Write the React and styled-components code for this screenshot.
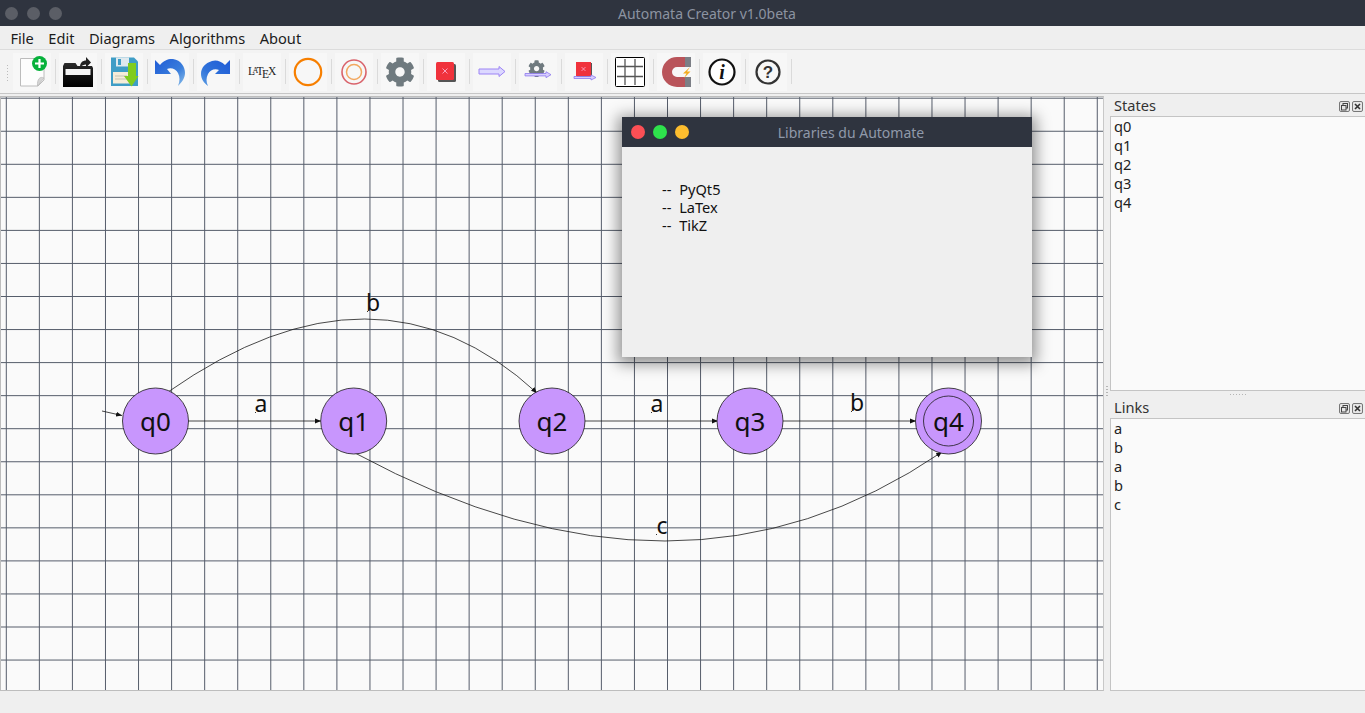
import React from "react";
import styled, { createGlobalStyle } from "styled-components";
import { FaCog } from "react-icons/fa";

const GlobalStyle = createGlobalStyle`
  html, body {
    margin: 0;
    padding: 0;
    height: 713px;
    overflow: hidden;
    background: #efefef;
    font-family: "Noto Sans", "Liberation Sans", sans-serif;
  }
`;

const Page = styled.div`
  position: relative;
  width: 1365px;
  height: 713px;
  display: flex;
  flex-direction: column;
  overflow: hidden;
  background: #efefef;
`;

const TitleBar = styled.div`
  height: 26px;
  flex: none;
  position: relative;
  display: flex;
  align-items: center;
  justify-content: center;
  padding-left: 49px;
  box-sizing: border-box;
  background: #2f343f;
  color: #8c93a1;
  font-size: 14px;
`;

const Lights = styled.div`
  position: absolute;
  left: 5px;
  top: 7px;
  display: flex;
  gap: 9px;
`;

const Light = styled.span`
  width: ${(props) => props.$size || 13}px;
  height: ${(props) => props.$size || 13}px;
  border-radius: 50%;
  background: ${(props) => props.$color || "#5b5e66"};
`;

const MenuBar = styled.div`
  height: 24px;
  flex: none;
  display: flex;
  align-items: center;
  gap: 14.5px;
  padding-left: 10.5px;
  background: #efefef;
  border-bottom: 1px solid #dcdcdc;
  box-sizing: border-box;
  color: #1c1c1c;
  font-size: 14.6px;
`;

const ToolBar = styled.div`
  height: 44px;
  flex: none;
  position: relative;
  display: flex;
  align-items: center;
  padding-left: 13px;
  box-sizing: border-box;
  background: #f3f3f3;
  border-bottom: 1px solid #c6c6c6;
`;

const Grip = styled.div`
  position: absolute;
  left: 6px;
  top: 14px;
  width: 4px;
  height: 19px;
  background-image: radial-gradient(#bcbcbc 0.7px, transparent 0.8px);
  background-size: 3px 3px;
`;

const ToolButton = styled.div`
  width: 38px;
  height: 38px;
  flex: none;
  display: flex;
  align-items: center;
  justify-content: center;
  background: #f7f7f7;
`;

const Separator = styled.div`
  width: 1px;
  height: 25px;
  flex: none;
  margin: 0 3px 0 4px;
  background: #dadada;
`;

const Main = styled.div`
  flex: 1;
  min-height: 0;
  display: flex;
  padding-top: 2px;
`;

const Canvas = styled.div`
  width: 1104px;
  flex: none;
  background: #fafafa;
  border: 1px solid #bdbdbd;
  border-right-color: #c8c8c8;
  box-sizing: border-box;
  height: 595px;
  overflow: hidden;
  svg {
    display: block;
  }
`;

const Dock = styled.div`
  flex: 1;
  display: flex;
  flex-direction: column;
  padding-left: 6px;
`;

const PanelHead = styled.div`
  height: 20px;
  flex: none;
  display: flex;
  align-items: center;
  justify-content: space-between;
  padding: 0 2px 2px 4px;
  box-sizing: border-box;
  color: #333;
  font-size: 14.6px;
`;

const HeadIcons = styled.div`
  display: flex;
  gap: 2px;
  margin-top: 2px;
`;

const PanelList = styled.div`
  height: ${(props) => props.$height}px;
  flex: none;
  box-sizing: border-box;
  padding: 0 3px;
  background: #fafafa;
  border: 1px solid #c4c4c4;
  border-right: none;
`;

const ListItem = styled.div`
  height: 19px;
  line-height: 19px;
  color: #222;
  font-size: 14.6px;
`;

const SplitHandle = styled.div`
  height: 7px;
  flex: none;
  display: flex;
  justify-content: center;
  align-items: center;
  &::before {
    content: "";
    width: 17px;
    height: 1px;
    background-image: radial-gradient(#b5b5b5 0.6px, transparent 0.7px);
    background-size: 3px 1px;
  }
`;

const SideGrip = styled.div`
  position: absolute;
  left: 1106px;
  top: 385px;
  width: 2px;
  height: 12px;
  background-image: radial-gradient(#b5b5b5 0.6px, transparent 0.7px);
  background-size: 2px 3px;
`;

const StatusBar = styled.div`
  height: 22px;
  flex: none;
  background: #efefef;
`;

const FloatWindow = styled.div`
  position: absolute;
  left: 622px;
  top: 117px;
  width: 410px;
  height: 240px;
  background: #efefef;
  box-shadow: 0 3px 14px 4px rgba(0, 0, 0, 0.42);
`;

const FloatTitle = styled.div`
  position: relative;
  height: 30px;
  display: flex;
  align-items: center;
  justify-content: center;
  padding-left: 48px;
  box-sizing: border-box;
  background: #2f343f;
  color: #8f99aa;
  font-size: 14px;
`;

const FloatLights = styled.div`
  position: absolute;
  left: 9px;
  top: 8px;
  display: flex;
  gap: 8px;
`;

const FloatBody = styled.div`
  padding: 33px 0 0 40px;
  color: #111;
  font-size: 14.6px;
  line-height: 18px;
  word-spacing: 4px;
`;

const NewIcon = () => (
  <svg width="32" height="32" viewBox="0 0 32 32">
    <path d="M4.500 2.500H28V24l-6 6H4.500z" fill="#fdfdfd" stroke="#bcbcbc" strokeWidth="1" />
    <path d="M28 22c-4-2-7 1-6.500 8z" fill="#d5d5d5" stroke="#bbb" strokeWidth="0.800" />
    <circle cx="23.500" cy="7.500" r="7.500" fill="#07b13b" />
    <path d="M23.500 3v9M19 7.500h9" stroke="#fff" strokeWidth="2.200" />
  </svg>
);

const OpenIcon = () => (
  <svg width="32" height="32" viewBox="0 0 32 32">
    <defs>
      <linearGradient id="openFill" x1="0" y1="0" x2="0" y2="1">
        <stop offset="0" stopColor="#2c2c2c" />
        <stop offset="0.500" stopColor="#111" />
        <stop offset="1" stopColor="#000" />
      </linearGradient>
    </defs>
    <path d="M1 31V10l1.500-3h11l2 3H30l1 2v19z" fill="url(#openFill)" />
    <path d="M3.500 13h25v6h-25z" fill="#f4f4f4" />
    <path d="M18 11c0-4.500 3-6.500 6-6.500V1l5 5.500-5 5V8.500c-2 0-4 1-6 2.500z" fill="#222" />
  </svg>
);

const SaveIcon = () => (
  <svg width="32" height="32" viewBox="0 0 32 32">
    <path d="M3 1.500h23l4 4V30H3z" fill="#3f9dc6" />
    <path d="M8 1.500h13v9H8z" fill="#dfe9ee" />
    <path d="M10 3h3v6h-3z" fill="#3f9dc6" />
    <path d="M5 16h19v11.500H5z" fill="#f5ecd8" />
    <path d="M7 20h12M7 23h12" stroke="#c3c3b4" strokeWidth="1" />
    <path d="M20 7h8v13h2.500L23.500 30.500 16 20h4z" fill="#7fcc1e" />
  </svg>
);

const UndoIcon = () => (
  <svg width="32" height="32" viewBox="0 0 32 32">
    <defs>
      <linearGradient id="undoFill" x1="0" y1="0" x2="1" y2="1">
        <stop offset="0" stopColor="#1f5bd6" />
        <stop offset="0.600" stopColor="#3a7edc" />
        <stop offset="1" stopColor="#8cc0ea" />
      </linearGradient>
    </defs>
    <path d="M1 4L6 9C10 4 15 2.500 19 3C27 4 31 11 31 17C31 22 28 26 24 30C26 25 26 21 24 17C22 13 17 11 13 13L17 18H1z" fill="url(#undoFill)" />
  </svg>
);

const RedoIcon = () => (
  <svg width="32" height="32" viewBox="0 0 32 32">
    <defs>
      <linearGradient id="redoFill" x1="1" y1="0" x2="0" y2="1">
        <stop offset="0" stopColor="#1f5bd6" />
        <stop offset="0.600" stopColor="#2f72da" />
        <stop offset="1" stopColor="#5ea0e4" />
      </linearGradient>
    </defs>
    <path d="M30 4L25 9C21 5 16 3.500 12 5C5 7 1 12 1 18C1 23 4 27 8 30C6 26 6 22 8 18C10 14 15 12 19 14L15 18H30z" fill="url(#redoFill)" />
  </svg>
);

const LatexIcon = () => (
  <svg width="32" height="32" viewBox="0 0 32 32" fontFamily="Liberation Serif, serif" fill="#222">
    <text x="2" y="19" fontSize="11.500">L</text>
    <text x="6.500" y="17" fontSize="8">A</text>
    <text x="10.500" y="19" fontSize="11.500">T</text>
    <text x="16" y="21.500" fontSize="11.500">E</text>
    <text x="22" y="19" fontSize="11.500">X</text>
  </svg>
);

const StateIcon = () => (
  <svg width="32" height="32" viewBox="0 0 32 32">
    <circle cx="16" cy="16" r="13.200" fill="none" stroke="#f77f00" strokeWidth="2.200" />
  </svg>
);

const FinalIcon = () => (
  <svg width="32" height="32" viewBox="0 0 32 32">
    <circle cx="16" cy="16" r="12" fill="none" stroke="#d9636b" strokeWidth="1.600" />
    <circle cx="16" cy="16" r="7.500" fill="none" stroke="#f2a860" strokeWidth="1.500" />
  </svg>
);

const GearIcon = () => <FaCog size={30} color="#6f7a7f" />;

const StopIcon = () => (
  <svg width="32" height="32" viewBox="0 0 32 32">
    <rect x="8" y="8" width="18" height="18" rx="1.500" fill="#555" />
    <rect x="6" y="6" width="18" height="18" rx="1.500" fill="#f0323c" />
    <path d="M12.500 12.500l5 5M17.500 12.500l-5 5" stroke="#fbd" strokeWidth="0.800" />
  </svg>
);

const ArrowIcon = () => (
  <svg width="32" height="32" viewBox="0 0 32 32">
    <path d="M3 13h20v-2.500l6 5-6 5V18H3z" fill="#dcd8ff" stroke="#9d84f5" strokeWidth="1" />
  </svg>
);

const GearArrowIcon = () => (
  <svg width="32" height="32" viewBox="0 0 32 32">
    <g transform="translate(6 4) scale(0.0335)" fill="#6f7a7f">
      <path d="M487.400 315.700l-42.600-24.600c4.300-23.200 4.300-47 0-70.200l42.600-24.600c4.900-2.800 7.100-8.600 5.500-14-11.100-35.600-30-67.800-54.700-94.600-3.800-4.100-10-5.100-14.800-2.300L380.800 110c-17.900-15.400-38.500-27.300-60.800-35.100V25.800c0-5.600-3.900-10.500-9.400-11.700-36.700-8.200-74.300-7.800-109.200 0-5.500 1.200-9.400 6.100-9.400 11.700V75c-22.200 7.900-42.800 19.800-60.800 35.100L88.700 85.500c-4.900-2.800-11-1.900-14.800 2.300-24.700 26.700-43.600 58.900-54.700 94.600-1.700 5.400.6 11.200 5.500 14L67.300 221c-4.300 23.200-4.300 47 0 70.200l-42.600 24.600c-4.900 2.800-7.100 8.600-5.500 14 11.100 35.600 30 67.800 54.700 94.600 3.800 4.100 10 5.100 14.800 2.300l42.600-24.600c17.900 15.400 38.500 27.300 60.800 35.100v49.200c0 5.600 3.900 10.500 9.400 11.700 36.700 8.200 74.300 7.800 109.200 0 5.500-1.200 9.400-6.100 9.400-11.700v-49.200c22.200-7.900 42.800-19.800 60.800-35.100l42.600 24.600c4.900 2.800 11 1.900 14.800-2.300 24.700-26.700 43.600-58.900 54.700-94.600 1.500-5.500-.7-11.300-5.600-14.100zM256 336c-44.100 0-80-35.900-80-80s35.900-80 80-80 80 35.900 80 80-35.900 80-80 80z" />
    </g>
    <path d="M3 17.500h21v-1.800l5 3-5 3v-1.800H3z" fill="#d8ceff" stroke="#8d78ee" strokeWidth="0.800" />
  </svg>
);

const StopArrowIcon = () => (
  <svg width="32" height="32" viewBox="0 0 32 32">
    <rect x="9" y="7" width="15" height="14" fill="#555" />
    <rect x="8" y="6" width="15" height="14" fill="#f0323c" />
    <path d="M13.500 11l4 4M17.500 11l-4 4" stroke="#fbd" strokeWidth="0.700" />
    <path d="M6 20.500h17v-1.500l5 2.500-5 2.500v-1.500H6z" fill="#d8ceff" stroke="#8d78ee" strokeWidth="0.800" />
  </svg>
);

const GridIcon = () => (
  <svg width="32" height="32" viewBox="0 0 32 32">
    <rect x="1.500" y="1.500" width="29" height="29" rx="1" fill="#fff" stroke="#000" strokeWidth="1" />
    <path d="M11 3v26M21 3v26M3 10.500h26M3 20.500h26" stroke="#555" strokeWidth="1.300" />
  </svg>
);

const MagnetIcon = () => (
  <svg width="32" height="32" viewBox="0 0 32 32">
    <path d="M31 1H17a15 15 0 0 0 0 30h14V21H17a5 5 0 0 1 0-10h14z" fill="#b9545a" />
    <path d="M25 1h6v10h-6zM25 21h6v10h-6z" fill="#7c7f86" />
    <path d="M30 11l-7 6.500h3.500L24 22l6.500-6.500H27z" fill="#f4ac1f" />
  </svg>
);

const InfoIcon = () => (
  <svg width="32" height="32" viewBox="0 0 32 32">
    <circle cx="16" cy="16" r="12.500" fill="#fff" stroke="#111" strokeWidth="2.200" />
    <text x="16" y="23" textAnchor="middle" fontFamily="Liberation Serif, serif" fontStyle="italic" fontWeight="700" fontSize="20" fill="#111">i</text>
  </svg>
);

const HelpIcon = () => (
  <svg width="32" height="32" viewBox="0 0 32 32">
    <circle cx="16" cy="16" r="11.500" fill="none" stroke="#333" strokeWidth="2.200" />
    <text x="16" y="22" textAnchor="middle" fontFamily="Liberation Sans, sans-serif" fontWeight="700" fontSize="17" fill="#333">?</text>
  </svg>
);

const FloatGlyph = () => (
  <svg width="11" height="11" viewBox="0 0 11 11">
    <rect x="0.500" y="0.500" width="10" height="10" rx="1.500" fill="#e6e6e6" stroke="#777" />
    <rect x="4" y="2.500" width="4.500" height="4.500" fill="none" stroke="#444" />
    <rect x="2.500" y="4.500" width="4.500" height="4.500" fill="#e6e6e6" stroke="#444" />
  </svg>
);

const CloseGlyph = () => (
  <svg width="11" height="11" viewBox="0 0 11 11">
    <rect x="0.500" y="0.500" width="10" height="10" rx="1.500" fill="#e6e6e6" stroke="#777" />
    <path d="M3 3l5 5M8 3l-5 5" stroke="#333" strokeWidth="1.600" />
  </svg>
);

const tools = [
  NewIcon, OpenIcon, SaveIcon, UndoIcon, RedoIcon, LatexIcon, StateIcon, FinalIcon, GearIcon,
  StopIcon, ArrowIcon, GearArrowIcon, StopArrowIcon, GridIcon, MagnetIcon, InfoIcon, HelpIcon,
];

const verticals = Array.from({ length: 34 }, (_, i) => 5.3 + i * 33.06);
const horizontals = Array.from({ length: 18 }, (_, i) => 1.2 + i * 33.05);

const nodes = [
  { name: "q0", x: 154.5 },
  { name: "q1", x: 352.7 },
  { name: "q2", x: 551 },
  { name: "q3", x: 749 },
  { name: "q4", x: 947.5, final: true },
];

const labels = [
  { text: "a", x: 260, y: 315 },
  { text: "b", x: 372, y: 214 },
  { text: "a", x: 656, y: 315 },
  { text: "b", x: 856, y: 314 },
  { text: "c", x: 661, y: 437 },
];

// canvas origin sits at page (1, 97)
const AutomatonDrawing = () => (
  <svg width="1102" height="593" viewBox="0 0 1102 593">
    <defs>
      <marker id="tip" markerWidth="7" markerHeight="6" refX="6" refY="3" orient="auto" markerUnits="userSpaceOnUse">
        <path d="M0 0.500L6 3L0 5.500z" fill="#111" />
      </marker>
    </defs>
    {verticals.map((x) => (
      <line key={x} x1={x} x2={x} y1="0" y2="593" stroke="#565d6b" strokeWidth="1" />
    ))}
    {horizontals.map((y) => (
      <line key={y} x1="0" x2="1102" y1={y} y2={y} stroke="#565d6b" strokeWidth="1" />
    ))}
    <g fill="none" stroke="#1a1a1a" strokeWidth="0.800">
      <line x1="101" y1="314" x2="121" y2="318.500" markerEnd="url(#tip)" />
      <line x1="187" y1="324" x2="320" y2="324" markerEnd="url(#tip)" />
      <line x1="584" y1="324" x2="717" y2="324" markerEnd="url(#tip)" />
      <line x1="782" y1="324" x2="915" y2="324" markerEnd="url(#tip)" />
      <path d="M167 295Q376 148.500 536 296" markerEnd="url(#tip)" />
      <path d="M354 356Q680.500 532.500 941 355" markerEnd="url(#tip)" />
    </g>
    {nodes.map((n) => (
      <g key={n.name}>
        <circle cx={n.x} cy="324" r="33" fill="#c896fd" stroke="#1a1a1a" strokeWidth="0.800" />
        {n.final && <circle cx={n.x} cy="324" r="25" fill="none" stroke="#1a1a1a" strokeWidth="0.800" />}
        <text x={n.x} y="333.500" textAnchor="middle" fontFamily="Noto Sans, sans-serif" fontSize="26" fill="#111">
          {n.name}
        </text>
      </g>
    ))}
    {labels.map((l, i) => (
      <g key={i}>
        <rect x={l.x - 6} y={l.y} width="1" height="1" fill="#333" />
        <text x={l.x} y={l.y} textAnchor="middle" fontFamily="Noto Sans, sans-serif" fontSize="23" fill="#111">
          {l.text}
        </text>
      </g>
    ))}
  </svg>
);

const Panel = ({ title, items, height }) => (
  <>
    <PanelHead>
      {title}
      <HeadIcons>
        <FloatGlyph />
        <CloseGlyph />
      </HeadIcons>
    </PanelHead>
    <PanelList $height={height}>
      {items.map((item, i) => (
        <ListItem key={i}>{item}</ListItem>
      ))}
    </PanelList>
  </>
);

export default function App() {
  return (
    <Page>
      <GlobalStyle />
      <TitleBar>
        <Lights>
          <Light />
          <Light />
          <Light />
        </Lights>
        Automata Creator v1.0beta
      </TitleBar>
      <MenuBar>
        <span>File</span>
        <span>Edit</span>
        <span>Diagrams</span>
        <span>Algorithms</span>
        <span>About</span>
      </MenuBar>
      <ToolBar>
        <Grip />
        {tools.map((Icon, i) => (
          <React.Fragment key={i}>
            <ToolButton>
              <Icon />
            </ToolButton>
            <Separator />
          </React.Fragment>
        ))}
      </ToolBar>
      <Main>
        <Canvas>
          <AutomatonDrawing />
        </Canvas>
        <Dock>
          <Panel title="States" items={["q0", "q1", "q2", "q3", "q4"]} height={275} />
          <SplitHandle />
          <Panel title="Links" items={["a", "b", "a", "b", "c"]} height={273} />
        </Dock>
      </Main>
      <StatusBar />
      <SideGrip />
      <FloatWindow>
        <FloatTitle>
          <FloatLights>
            <Light $size={14} $color="#fc4f55" />
            <Light $size={14} $color="#2ee24c" />
            <Light $size={14} $color="#fdbd2e" />
          </FloatLights>
          Libraries du Automate
        </FloatTitle>
        <FloatBody>
          <div>-- PyQt5</div>
          <div>-- LaTex</div>
          <div>-- TikZ</div>
        </FloatBody>
      </FloatWindow>
    </Page>
  );
}
